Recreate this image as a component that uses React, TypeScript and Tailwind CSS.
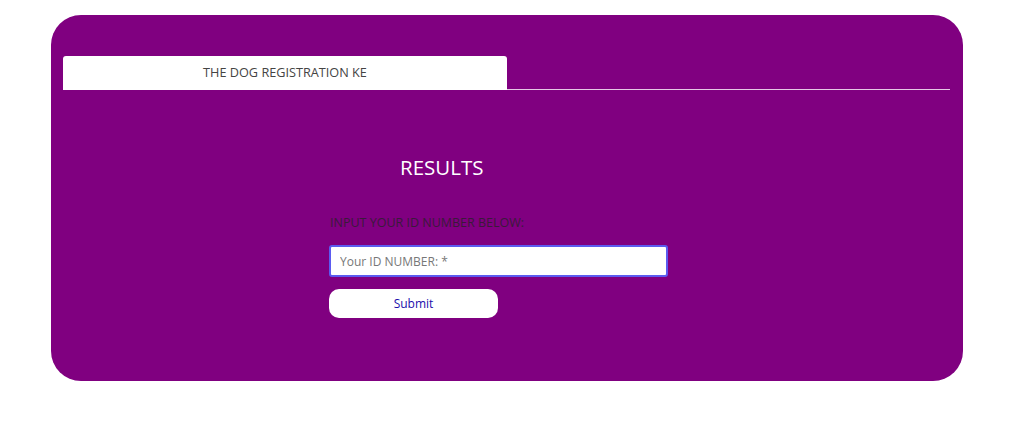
export default function App() {
  return (
    <div className="w-[1013px] h-[434px] bg-white pt-[15px] pl-[51px]" style={{ fontFamily: '"Open Sans", "Noto Sans", sans-serif' }}>
      <div className="w-[912px] h-[366px] rounded-[30px] bg-[#800080] px-[12px] pt-[41px]">
        <div className="flex items-end border-b border-[#e6c9e6] mr-[1px]">
          <div className="w-[444px] h-[34px] bg-white rounded-t-[3px] flex items-center justify-center text-[12.7px] text-[#444444] -mb-px">
            THE DOG REGISTRATION KE
          </div>
        </div>
        <div className="pl-[266px]">
          <h1 className="mt-[63px] pl-[71px] text-[20.5px] leading-[28px] text-white">RESULTS</h1>
          <p className="mt-[34px] text-[12.5px] leading-[16px] text-[#3a1a3a] pl-[1px]">INPUT YOUR ID NUMBER BELOW:</p>
          <input
            type="text"
            placeholder="Your ID NUMBER: *"
            className="mt-[14px] block w-[339px] h-[32px] rounded-[3px] bg-white border-2 border-[#5b5bf0] px-[9px] text-[12px] text-[#333] placeholder:text-[#777777] outline-none"
          />
          <button className="mt-[12px] w-[169px] h-[29px] rounded-[10px] bg-white text-[12px] text-[#1a0dab]">Submit</button>
        </div>
      </div>
    </div>
  )
}
